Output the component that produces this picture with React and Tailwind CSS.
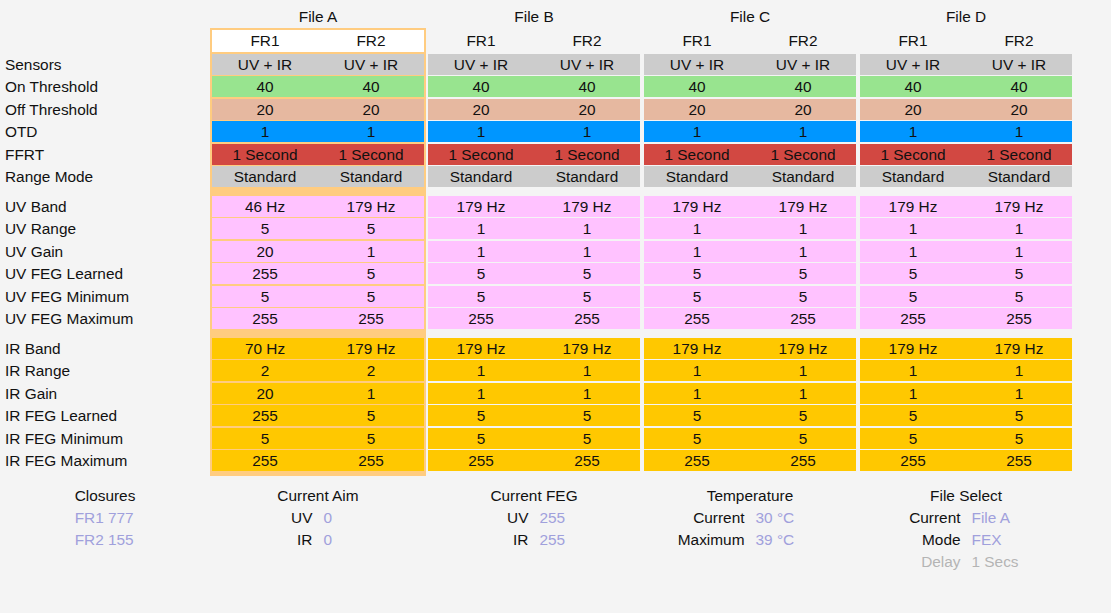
const GROUPS = [
  ["Sensors", "On Threshold", "Off Threshold", "OTD", "FFRT", "Range Mode"],
  ["UV Band", "UV Range", "UV Gain", "UV FEG Learned", "UV FEG Minimum", "UV FEG Maximum"],
  ["IR Band", "IR Range", "IR Gain", "IR FEG Learned", "IR FEG Minimum", "IR FEG Maximum"],
];

const ROW_BG = [
  ["bg-[#cccccc]", "bg-[#98e48f]", "bg-[#e6b8a0]", "bg-[#0096ff]", "bg-[#d24842]", "bg-[#cccccc]"],
  Array(6).fill("bg-[#ffc2ff]"),
  Array(6).fill("bg-[#ffc800]"),
];

const COMMON = ["UV + IR", "40", "20", "1", "1 Second", "Standard"];
const OTHER = [COMMON, ["179 Hz", "1", "1", "5", "5", "255"], ["179 Hz", "1", "1", "5", "5", "255"]];

const FILES = [
  {
    name: "File A",
    selected: true,
    fr1: [COMMON, ["46 Hz", "5", "20", "255", "5", "255"], ["70 Hz", "2", "20", "255", "5", "255"]],
    fr2: [COMMON, ["179 Hz", "5", "1", "5", "5", "255"], ["179 Hz", "2", "1", "5", "5", "255"]],
  },
  { name: "File B", fr1: OTHER, fr2: OTHER },
  { name: "File C", fr1: OTHER, fr2: OTHER },
  { name: "File D", fr1: OTHER, fr2: OTHER },
];

function Title({ children }) {
  return <div className="h-[28px] pt-[7px] leading-[20px] text-center">{children}</div>;
}

function LabelColumn() {
  return (
    <div className="w-[210px] shrink-0">
      <Title />
      <div className="flex flex-col gap-[1.5px] pt-[2px] pl-[5px]">
        <div className="h-[22px]" />
        {GROUPS.map((g, gi) => (
          <div key={gi} className="contents">
            {gi > 0 && <div className="h-[5.5px]" />}
            {g.map((label) => (
              <div key={label} className="h-[21px] leading-[21px] whitespace-nowrap">
                {label}
              </div>
            ))}
          </div>
        ))}
      </div>
    </div>
  );
}

function FileColumn({ file }) {
  return (
    <div className="w-[216px] shrink-0">
      <Title>{file.name}</Title>
      <div
        className={
          "flex flex-col gap-[1.5px] p-[2px] pb-[5px] " + (file.selected ? "bg-[#ffcc80]" : "")
        }
      >
        <div className={"h-[22px] flex leading-[22px] " + (file.selected ? "bg-white" : "")}>
          <div className="w-1/2 text-center">FR1</div>
          <div className="w-1/2 text-center">FR2</div>
        </div>
        {GROUPS.map((g, gi) => (
          <div key={gi} className="contents">
            {gi > 0 && <div className="h-[5.5px]" />}
            {g.map((label, ri) => (
              <div key={label} className={"h-[21px] flex leading-[21px] " + ROW_BG[gi][ri]}>
                <div className="w-1/2 text-center">{file.fr1[gi][ri]}</div>
                <div className="w-1/2 text-center">{file.fr2[gi][ri]}</div>
              </div>
            ))}
          </div>
        ))}
      </div>
    </div>
  );
}

function Pairs({ title, rows }) {
  return (
    <div className="w-[216px] shrink-0">
      <div className="text-center">{title}</div>
      <div className="grid grid-cols-2 gap-x-[11px]">
        {rows.map(([label, value, dim]) => (
          <div key={label} className="contents">
            <div className={"text-right " + (dim ? "text-[#b4b4b4]" : "")}>{label}</div>
            <div className={"text-left " + (dim ? "text-[#b4b4b4]" : "text-[#a0a0dc]")}>{value}</div>
          </div>
        ))}
      </div>
    </div>
  );
}

export default function App() {
  return (
    <div
      className="min-h-screen w-full bg-[#f4f4f4] text-[#111] text-[15.4px] leading-[22px]"
      style={{ fontFamily: '"Liberation Sans", Arial, sans-serif' }}
    >
      <div className="flex">
        <LabelColumn />
        {FILES.map((f) => (
          <FileColumn key={f.name} file={f} />
        ))}
      </div>

      <div className="flex mt-[9px]">
        <div className="w-[210px] shrink-0">
          <div className="w-fit mx-auto">
            <div>Closures</div>
            <div className="text-[#a0a0dc]">FR1 777</div>
            <div className="text-[#a0a0dc]">FR2 155</div>
          </div>
        </div>
        <Pairs title="Current Aim" rows={[["UV", "0"], ["IR", "0"]]} />
        <Pairs title="Current FEG" rows={[["UV", "255"], ["IR", "255"]]} />
        <Pairs title="Temperature" rows={[["Current", "30 °C"], ["Maximum", "39 °C"]]} />
        <Pairs
          title="File Select"
          rows={[["Current", "File A"], ["Mode", "FEX"], ["Delay", "1 Secs", true]]}
        />
      </div>
    </div>
  );
}
